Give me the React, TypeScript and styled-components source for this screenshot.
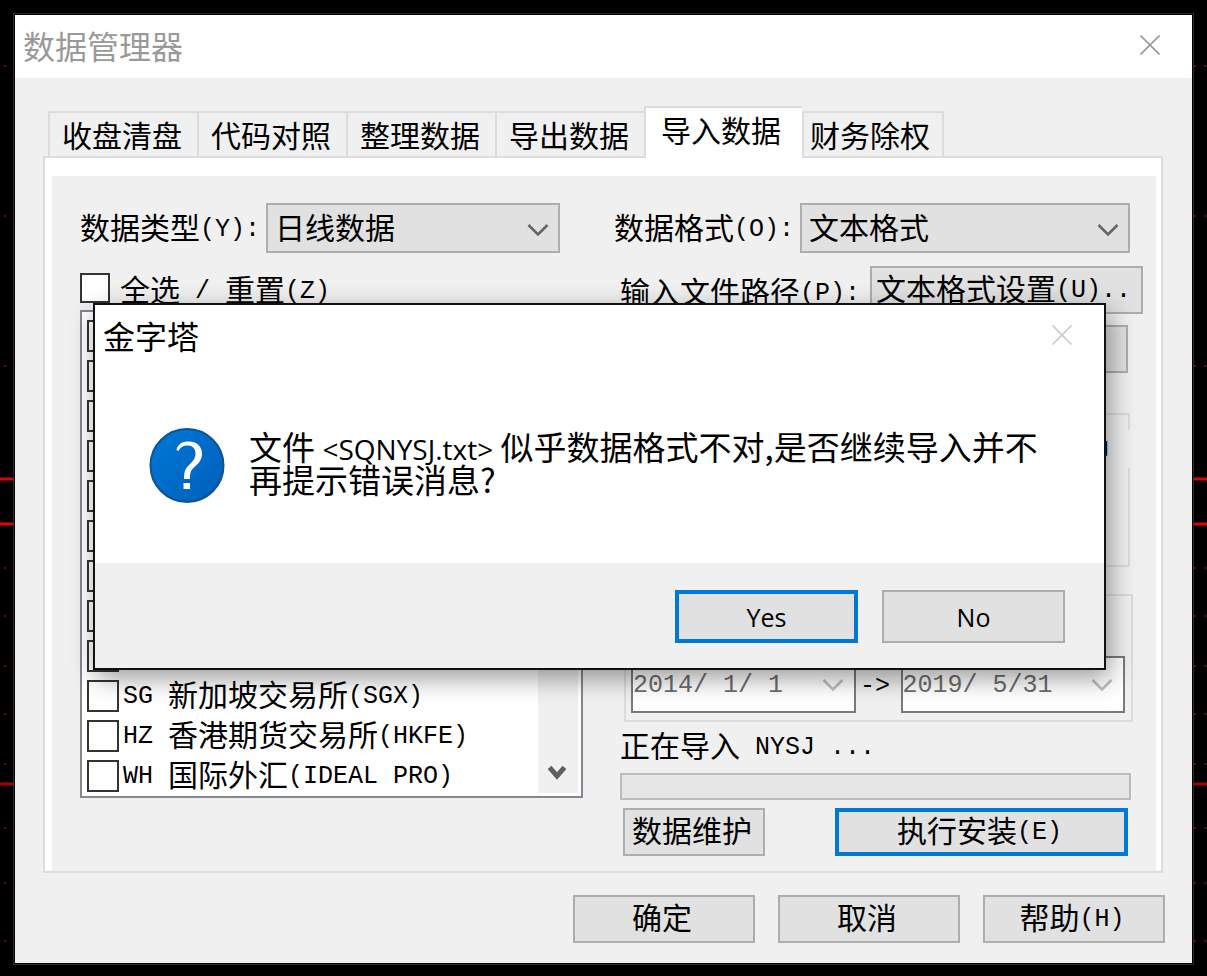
import React from "react";
import styled, { createGlobalStyle, css } from "styled-components";

const GlobalStyle = createGlobalStyle`
  * { box-sizing: border-box; }
  body { margin: 0; background: #000; }
  button, input, select { font: inherit; color: inherit; margin: 0; border-radius: 0; }
`;

const Desktop = styled.div`
  position: relative;
  min-height: 100vh;
  padding: 13px 13px 11px;
  background: #000;
  color: #000;
  font: 30px/32px "Noto Sans CJK SC", sans-serif;
`;

const Chart = styled.svg`
  position: absolute;
  inset: 0;
  width: 100%;
  height: 100%;
`;

const Window = styled.section`
  position: relative;
  padding: 1px;
  border: 1px solid #2b2b2b;
  background: #000;
`;

const TitleBar = styled.header<{ $muted?: boolean }>`
  display: flex;
  align-items: center;
  justify-content: space-between;
  height: 63px;
  padding: 0 32px 4px 8px;
  background: #fff;
  color: ${(p) => (p.$muted ? "#999" : "#000")};
`;

const Title = styled.h1`
  margin: 0;
  font: 400 32px/40px "Noto Sans CJK SC", sans-serif;
`;

const CloseButton = styled.button`
  display: flex;
  padding: 0;
  border: 0;
  background: none;
`;

const Body = styled.main`
  padding: 28px 29px 20px 28px;
  background: #f0f0f0;
`;

const TabStrip = styled.div`
  display: flex;
  align-items: flex-end;
  padding-left: 5px;
`;

const Tab = styled.button<{ $active?: boolean }>`
  height: 45px;
  padding: 0 15px 2px 12px;
  border: solid #dcdcdc;
  border-width: 2px 0 0 2px;
  background: #f0f0f0;
  white-space: nowrap;
  &:last-child { padding: 0 12px 2px 6px; border-right-width: 2px; }
  ${(p) =>
    p.$active &&
    css`
      z-index: 1;
      height: 52px;
      margin-bottom: -2px;
      padding: 0 21px 8px 15px;
      background: #fff;
    `}
`;

const TabPanel = styled.div`
  padding: 18px 5px 0 7px;
  border: 2px solid #dcdcdc;
  background: #fff;
`;

const Columns = styled.div`
  display: grid;
  grid-template-columns: 503fr 529fr;
  gap: 31px;
  align-items: start;
  padding: 27px 13px 15px 28px;
  background: #f0f0f0;
`;

const Column = styled.div`
  display: flex;
  flex-direction: column;
  min-width: 0;
`;

const Field = styled.div<{ $end: number }>`
  display: flex;
  align-items: center;
  gap: 6px;
  height: 50px;
  padding-right: ${(p) => p.$end}px;
`;

const Label = styled.label`
  padding-bottom: 4px;
  white-space: nowrap;
`;

const Half = styled.span`
  font: 25px/20px "Liberation Mono", monospace;
  vertical-align: 3px;
  white-space: pre;
`;

const SelectWrap = styled.div`
  position: relative;
  flex: 1;
  height: 50px;
`;

const Select = styled.select`
  appearance: none;
  width: 100%;
  height: 100%;
  padding: 0 40px 4px 7px;
  border: 2px solid #adadad;
  background: #e1e1e1;
`;

const SelectArrow = styled.svg`
  position: absolute;
  right: 11px;
  top: 20px;
  pointer-events: none;
`;

const Button = styled.button<{ $primary?: boolean; $w?: number }>`
  height: 48px;
  padding: 0 4px 6px 0;
  width: ${(p) => (p.$w ? `${p.$w}px` : "auto")};
  border: ${(p) => (p.$primary ? "4px solid #0078d7" : "2px solid #adadad")};
  background: #e1e1e1;
  white-space: nowrap;
`;

const CheckBox = styled.input<{ $size: number }>`
  appearance: none;
  flex: none;
  display: grid;
  place-items: center;
  width: ${(p) => p.$size}px;
  height: ${(p) => p.$size}px;
  border: 2px solid #333;
  background: #fff;
  &:checked::after {
    content: "";
    width: 8px;
    height: 16px;
    border: solid #333;
    border-width: 0 3px 3px 0;
    transform: rotate(45deg);
  }
`;

const SelectAll = styled.label`
  display: flex;
  align-items: center;
  gap: 10px;
  height: 30px;
  margin-top: 20px;
  white-space: nowrap;
`;

const MarketList = styled.div`
  display: flex;
  margin-top: 7px;
  padding-right: 3px;
  border: 2px solid #828790;
  background: #fff;
`;

const MarketRows = styled.ul`
  flex: 1;
  min-width: 0;
  margin: 0;
  padding: 4px 0 0 5px;
  list-style: none;
`;

const MarketRow = styled.label`
  display: flex;
  align-items: center;
  gap: 4px;
  height: 40px;
  white-space: nowrap;
`;

const MarketName = styled.span`
  padding-bottom: 6px;
`;

const ScrollBar = styled.div`
  display: flex;
  align-items: flex-end;
  justify-content: center;
  width: 40px;
  margin-bottom: 3px;
  padding: 0 2px 12px 0;
  background: #f0f0f0;
`;

const FormatRow = styled.div`
  display: flex;
  align-items: center;
  gap: 10px;
  height: 48px;
  margin-top: 13px;
  padding-left: 6px;
  ${Label} { padding-bottom: 0; }
  ${Button} { flex: 1; padding-left: 4px; text-align: left; }
`;

const PathRow = styled.div`
  display: flex;
  gap: 10px;
  margin: 11px 15px 0 6px;
`;

const PathInput = styled.input`
  flex: 1;
  min-width: 0;
  height: 48px;
  border: 2px solid #7a7a7a;
  background: #fff;
`;

const OptionGroup = styled.div`
  height: 154px;
  margin: 40px 13px 0 6px;
  padding-top: 15px;
  border: 2px solid #dcdcdc;
`;

const GroupNote = styled.p`
  height: 38px;
  margin: 0 -2px 0 0;
  padding: 2px 20px 0 0;
  background: #f0f0f0;
  text-align: right;
`;

const DateGroup = styled.div`
  display: flex;
  align-items: flex-end;
  height: 128px;
  margin: 27px 10px 0;
  padding: 0 6px 7px 5px;
  border: 2px solid #dcdcdc;
`;

const DateBox = styled.div`
  display: flex;
  align-items: center;
  flex: 1;
  min-width: 0;
  height: 57px;
  padding-right: 10px;
  border: 2px solid #7a7a7a;
  background: #fff;
  color: #6d6d6d;
`;

const DateInput = styled.input`
  flex: 1;
  width: 100%;
  min-width: 0;
  padding: 2px 0 0;
  border: 0;
  background: none;
  font: 25px/32px "Liberation Mono", monospace;
`;

const DateSeparator = styled.span`
  width: 45px;
  padding: 0 6px 14px 0;
  text-align: center;
`;

const Status = styled.p`
  height: 32px;
  margin: 6px 0 0 6px;
  white-space: nowrap;
`;

const Progress = styled.progress`
  appearance: none;
  display: block;
  width: auto;
  height: 27px;
  margin: 13px 12px 0 6px;
  border: 2px solid #bcbcbc;
  background: #e6e6e6;
  &::-webkit-progress-bar { background: #e6e6e6; }
`;

const Actions = styled.div`
  display: flex;
  justify-content: space-between;
  margin: 8px 15px 0 9px;
`;

const Footer = styled.footer`
  display: flex;
  justify-content: flex-end;
  gap: 23px;
  margin: 22px -2px 0 0;
`;

const Dialog = styled.div`
  position: absolute;
  z-index: 2;
  top: 289px;
  left: 79px;
  right: 87px;
  border: 2px solid #111;
  background: #fff;
  box-shadow: 4px 8px 24px rgba(0, 0, 0, 0.4);
`;

const Message = styled.div`
  display: flex;
  align-items: flex-start;
  gap: 24px;
  height: 195px;
  padding: 60px 20px 0 54px;
`;

const MessageText = styled.p`
  margin: 2px 0 0;
  font: 400 33px/33px "Noto Sans CJK SC", sans-serif;
  white-space: nowrap;
`;

const FileName = styled.span`
  font: 28px/20px "Open Sans", sans-serif;
`;

const DialogActions = styled.div`
  display: flex;
  justify-content: flex-end;
  gap: 24px;
  padding: 27px 39px 25px;
  background: #f0f0f0;
  ${Button} { height: 53px; padding: 0; font: 25px/32px "Open Sans", sans-serif; }
`;

const Cross = ({ color }: { color: string }) => (
  <svg width="20" height="20" viewBox="0 0 20 20" aria-hidden="true">
    <path d="M0.5 0.5 19.5 19.5M19.5 0.5 0.5 19.5" stroke={color} strokeWidth="1.6" fill="none" />
  </svg>
);

const ArrowPath = ({ color }: { color: string }) => (
  <path d="M1.5 2 11 11.5 20.5 2" stroke={color} strokeWidth="2.6" fill="none" />
);

const QuestionIcon = () => (
  <svg width="76" height="76" viewBox="0 0 76 76" aria-hidden="true">
    <defs>
      <linearGradient id="disc" x1="0" y1="0" x2="1" y2="1">
        <stop offset="0" stopColor="#0078d7" />
        <stop offset="1" stopColor="#005fb8" />
      </linearGradient>
    </defs>
    <circle cx="38" cy="37.5" r="36.5" fill="url(#disc)" stroke="#0b5394" strokeWidth="2" />
    <path
      d="M27.500 22C28.500 16 33.500 13.500 39.500 13.500C47.500 13.500 53 18 53 25.500C53 32 49.500 35.500 45.500 39C42 42 41 44 41 51H35C35 43 36.500 40.500 40.500 36.500C44 33 46.500 30.500 46.500 25.500C46.500 20.500 43.500 17.500 39 17.500C34 17.500 31 19.500 29.500 23Z"
      fill="#fff"
    />
    <rect x="34.500" y="55" width="6.500" height="6" fill="#fff" />
  </svg>
);

const tabs = ["收盘清盘", "代码对照", "整理数据", "导出数据", "导入数据", "财务除权"];

type Market = { code: string; name: string; suffix: string };
const markets: Market[] = [
  { code: "SG", name: "新加坡交易所", suffix: "(SGX)" },
  { code: "HZ", name: "香港期货交易所", suffix: "(HKFE)" },
  { code: "WH", name: "国际外汇", suffix: "(IDEAL PRO)" },
];

const dottedRows = [66, 216, 366, 568, 616, 666, 714, 764, 828, 883, 941];
const solidRows = [
  { y: 479, color: "#e60000" },
  { y: 524, color: "#e60000" },
  { y: 784, color: "#a80000" },
];

export default function App() {
  return (
    <>
      <GlobalStyle />
      <Desktop>
        <Chart aria-hidden="true">
          {dottedRows.map((y) => (
            <line key={y} x1="4" x2="100%" y1={y} y2={y} stroke="#700" strokeWidth="2" strokeDasharray="2 8" />
          ))}
          {solidRows.map(({ y, color }) => (
            <line key={y} x1="0" x2="100%" y1={y} y2={y} stroke={color} strokeWidth="3" />
          ))}
        </Chart>
        <Window>
          <TitleBar $muted>
            <Title>数据管理器</Title>
            <CloseButton aria-label="关闭"><Cross color="#999" /></CloseButton>
          </TitleBar>
          <Body>
            <TabStrip role="tablist">
              {tabs.map((name) => (
                <Tab key={name} role="tab" aria-selected={name === "导入数据"} $active={name === "导入数据"}>
                  {name}
                </Tab>
              ))}
            </TabStrip>
            <TabPanel role="tabpanel">
              <Columns>
                <Column>
                  <Field $end={23}>
                    <Label htmlFor="type">数据类型<Half>(Y):</Half></Label>
                    <SelectWrap>
                      <Select id="type"><option>日线数据</option></Select>
                      <SelectArrow width="22" height="14" aria-hidden="true"><ArrowPath color="#666" /></SelectArrow>
                    </SelectWrap>
                  </Field>
                  <SelectAll>
                    <CheckBox type="checkbox" $size={30} />
                    <span>全选<Half> / </Half>重置<Half>(Z)</Half></span>
                  </SelectAll>
                  <MarketList>
                    <MarketRows>
                      {Array.from({ length: 9 }, (_, i) => (
                        <li key={i}>
                          <MarketRow>
                            <CheckBox type="checkbox" $size={32} defaultChecked={i === 0} aria-label={`市场 ${i + 1}`} />
                          </MarketRow>
                        </li>
                      ))}
                      {markets.map((m) => (
                        <li key={m.code}>
                          <MarketRow>
                            <CheckBox type="checkbox" $size={32} />
                            <MarketName><Half>{m.code} </Half>{m.name}<Half>{m.suffix}</Half></MarketName>
                          </MarketRow>
                        </li>
                      ))}
                    </MarketRows>
                    <ScrollBar>
                      <svg width="18" height="16" aria-hidden="true">
                        <path d="M1.500 2.500 9 11 16.500 2.500" fill="none" stroke="#606060" strokeWidth="5" />
                      </svg>
                    </ScrollBar>
                  </MarketList>
                </Column>

                <Column>
                  <Field $end={13}>
                    <Label htmlFor="format">数据格式<Half>(O):</Half></Label>
                    <SelectWrap>
                      <Select id="format"><option>文本格式</option></Select>
                      <SelectArrow width="22" height="14" aria-hidden="true"><ArrowPath color="#666" /></SelectArrow>
                    </SelectWrap>
                  </Field>
                  <FormatRow>
                    <Label htmlFor="path">输入文件路径<Half>(P):</Half></Label>
                    <Button>文本格式设置<Half>(U)..</Half></Button>
                  </FormatRow>
                  <PathRow>
                    <PathInput id="path" type="text" />
                    <Button $w={60} aria-label="浏览" />
                  </PathRow>
                  <OptionGroup role="group">
                    <GroupNote>中</GroupNote>
                  </OptionGroup>
                  <DateGroup role="group" aria-label="日期范围">
                    <DateBox>
                      <DateInput aria-label="开始日期" defaultValue="2014/ 1/ 1" />
                      <svg width="22" height="14" aria-hidden="true"><ArrowPath color="#bfbfbf" /></svg>
                    </DateBox>
                    <DateSeparator><Half>-&gt;</Half></DateSeparator>
                    <DateBox>
                      <DateInput aria-label="结束日期" defaultValue="2019/ 5/31" />
                      <svg width="22" height="14" aria-hidden="true"><ArrowPath color="#bfbfbf" /></svg>
                    </DateBox>
                  </DateGroup>
                  <Status>正在导入<Half> NYSJ ...</Half></Status>
                  <Progress value={0} max={100} aria-label="导入进度" />
                  <Actions>
                    <Button $w={142}>数据维护</Button>
                    <Button $w={293} $primary>执行安装<Half>(E)</Half></Button>
                  </Actions>
                </Column>
              </Columns>
            </TabPanel>
            <Footer>
              <Button $w={182}>确定</Button>
              <Button $w={182}>取消</Button>
              <Button $w={182}>帮助<Half>(H)</Half></Button>
            </Footer>
          </Body>

          <Dialog role="dialog" aria-labelledby="dialog-title">
            <TitleBar>
              <Title as="h2" id="dialog-title">金字塔</Title>
              <CloseButton aria-label="关闭"><Cross color="#ccc" /></CloseButton>
            </TitleBar>
            <Message>
              <QuestionIcon />
              <MessageText>
                文件 <FileName>&lt;SQNYSJ.txt&gt;</FileName> 似乎数据格式不对,是否继续导入并不
                <br />
                再提示错误消息?
              </MessageText>
            </Message>
            <DialogActions>
              <Button $w={183} $primary>Yes</Button>
              <Button $w={183}>No</Button>
            </DialogActions>
          </Dialog>
        </Window>
      </Desktop>
    </>
  );
}
